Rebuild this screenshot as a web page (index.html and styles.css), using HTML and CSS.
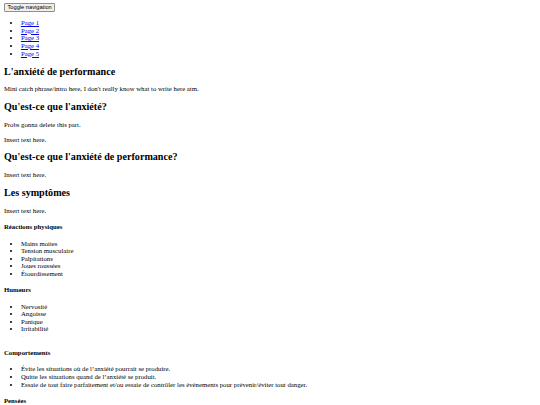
FILE: index.html
```html
<!DOCTYPE html>
<html lang="fr">
<head>
<meta charset="utf-8">
<title>L'anxiété de performance</title>
<link rel="stylesheet" href="styles.css">
</head>
<body class="page">
<nav class="nav">
  <button class="toggle" type="button">Toggle navigation</button>
  <ul class="list">
    <li><a class="link" href="#">Page 1</a></li>
    <li><a class="link" href="#">Page 2</a></li>
    <li><a class="link" href="#">Page 3</a></li>
    <li><a class="link" href="#">Page 4</a></li>
    <li><a class="link" href="#">Page 5</a></li>
  </ul>
</nav>
<main>
  <h2 class="title">L'anxiété de performance</h2>
  <p class="text">Mini catch phrase/intro here, I don't really know what to write here atm.</p>
  <h2 class="title">Qu'est-ce que l'anxiété?</h2>
  <p class="text">Probs gonna delete this part.</p>
  <p class="text">Insert text here.</p>
  <h2 class="title">Qu'est-ce que l'anxiété de performance?</h2>
  <p class="text">Insert text here.</p>
  <h2 class="title">Les symptômes</h2>
  <p class="text">Insert text here.</p>
  <h4 class="sub">Réactions physiques</h4>
  <ul class="list">
    <li>Mains moites</li>
    <li>Tension musculaire</li>
    <li>Palpitations</li>
    <li>Joues roussées</li>
    <li>Étourdissement</li>
  </ul>
  <h4 class="sub">Humeurs</h4>
  <ul class="list">
    <li>Nervosité</li>
    <li>Angoisse</li>
    <li>Panique</li>
    <li>Irritabilité</li>
  </ul>
  <div class="spacer"><span class="mark">'</span></div>
  <h4 class="sub">Comportements</h4>
  <ul class="list">
    <li>Évite les situations où de l’anxiété pourrait se produire.</li>
    <li>Quitte les situations quand de l’anxiété se produit.</li>
    <li>Essaie de tout faire parfaitement et/ou essaie de contrôler les événements pour prévenir/éviter tout danger.</li>
  </ul>
  <h4 class="sub">Pensées</h4>
</main>
</body>
</html>
```

FILE: styles.css
```css
.page {
  margin: 3.4px 4px;
  font-family: "Liberation Serif", "Times New Roman", serif;
  font-size: 6.75px;
  line-height: 7.62px;
  color: #000;
  background: #fff;
}

.toggle {
  display: block;
  box-sizing: border-box;
  height: 9px;
  font-family: "Liberation Sans", Arial, sans-serif;
  font-size: 5.7px;
  line-height: 7px;
  padding: 0 2.5px;
  margin: 0;
  border: 1px solid #8f8f8f;
  border-radius: 1px;
  background: #efefef;
  color: #000;
}

.list {
  margin: 6.7px 0;
  padding-left: 16.9px;
  list-style: disc;
}

.link {
  color: #0000ee;
  text-decoration: underline;
}

.title {
  font-size: 10.125px;
  line-height: 11.6px;
  font-weight: bold;
  margin: 8.3px 0;
}

.text {
  margin: 6.7px 0;
}

.sub {
  font-size: 6.75px;
  font-weight: bold;
  margin: 8.6px 0;
}

.spacer {
  height: 7.62px;
  padding-left: 17.5px;
  margin-top: -6.7px;
  margin-bottom: 6.7px;
  overflow: hidden;
}

.mark {
  color: #aaa;
  font-size: 5px;
}
```
